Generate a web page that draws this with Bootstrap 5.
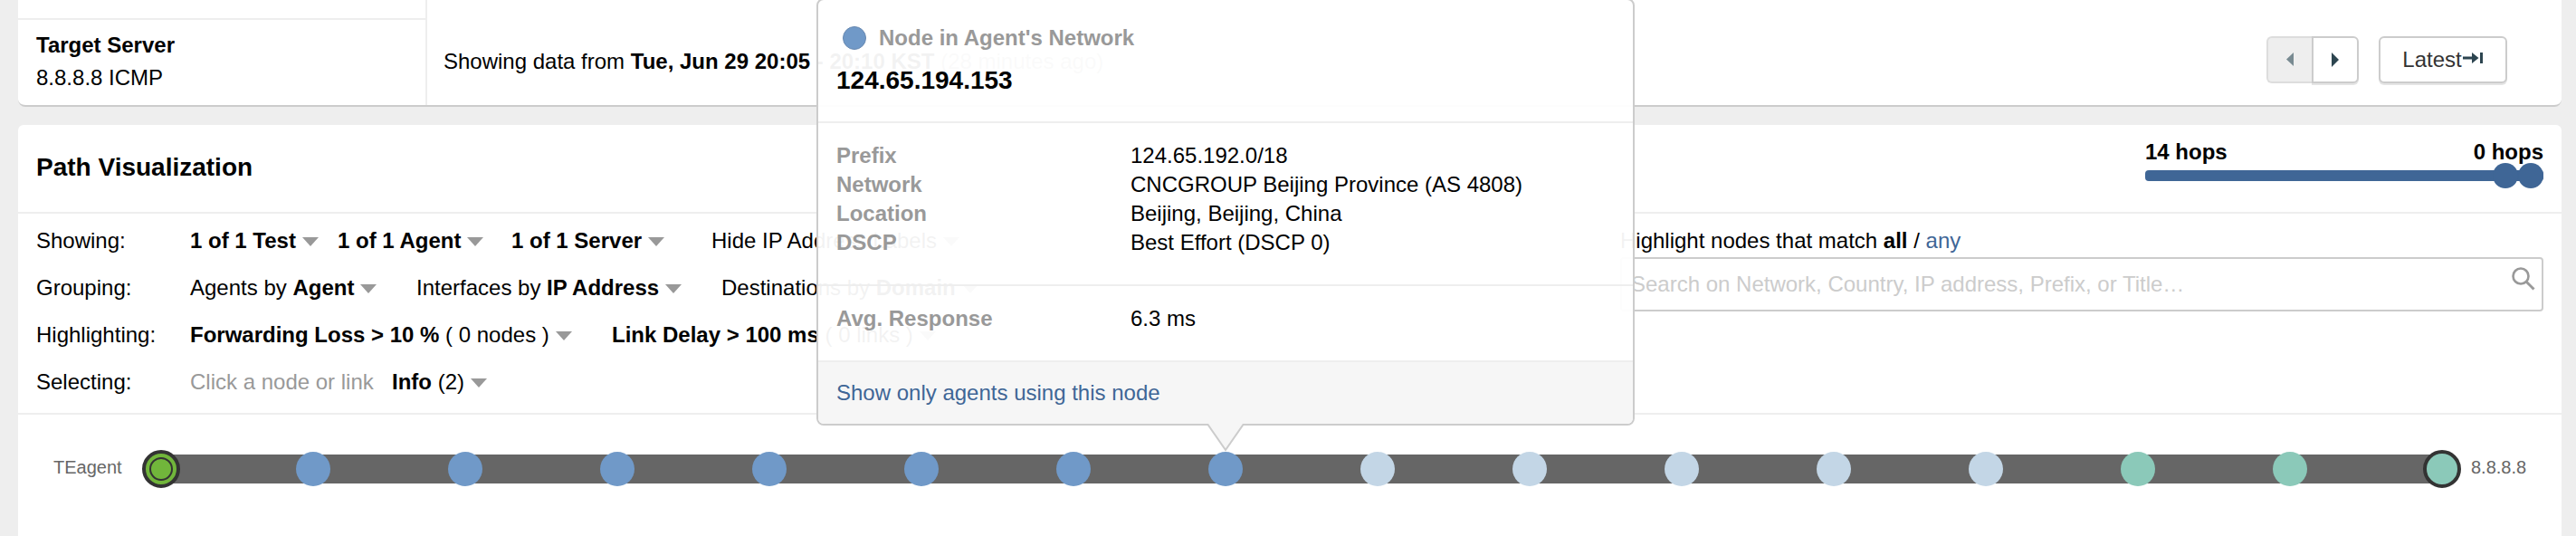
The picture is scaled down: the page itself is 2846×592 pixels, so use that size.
<!DOCTYPE html>
<html lang="en">
<head>
<meta charset="utf-8">
<title>Path Visualization</title>
<link href="https://cdn.jsdelivr.net/npm/bootstrap@5.3.0/dist/css/bootstrap.min.css" rel="stylesheet">
<style>
body{background:#eee;color:#000;font:24px/36px "Liberation Sans",Arial,sans-serif;height:592px;overflow:hidden}
a{color:#3f6696;text-decoration:none}
.page{width:2846px;height:592px;padding:0 16px 0 20px;overflow:hidden}
.panel{background:#fff;width:2810px}
.summary{height:118px;border-bottom:2px solid #ccc;border-radius:0 0 8px 8px}
.target{width:452px;border-right:2px solid #eee}
.target-prev{height:22px;border-bottom:2px solid #eee}
.target-box{padding:10px 20px 0}
.range{padding:20px 0 0 18px}
.steps{margin:40px 60px 0 auto;gap:22px}
.tool{height:52px;border:2px solid #ccc;background:#fff;box-shadow:0 2px 0 #e5e5e5;color:#333;padding:0;font-size:24px;line-height:46px;border-radius:6px}
.tool.prev{width:50px;background:#eee;border-color:#ddd;border-right:0;box-shadow:none;border-radius:6px 0 0 6px}
.tool.next{width:52px;border-radius:0 6px 6px 0}
.tool.latest{width:142px}
.tool svg{display:block}
.tool.latest svg{margin-top:-4px}
.viz{margin-top:20px;height:480px;border-radius:6px 6px 0 0}
.viz-head{height:98px;padding:0 20px;border-bottom:2px solid #eee}
.viz-head h1{font-size:28px;line-height:40px;font-weight:700;margin:27px 0 0}
.hops{width:440px;padding-top:16px;line-height:28px;font-weight:700}
.hop-track{height:12px;margin-top:6px;border-radius:4px;background:#3f6696}
.hop-track i{width:28px;height:28px;border-radius:50%;background:#3f6696;flex:none}
.filters{height:222px;padding:4px 20px 8px;border-bottom:2px solid #eee;line-height:52px;white-space:nowrap}
.filter-list{width:1750px}
.filter-row{display:grid;height:52px}
.r1{grid-template-columns:170px 163px 192px 221px 1fr}
.r2{grid-template-columns:170px 250px 337px 1fr}
.r3{grid-template-columns:170px 466px 1fr}
.r4{grid-template-columns:170px 223px 1fr}
.caret{display:inline-block;border:9px solid transparent;border-top:10px solid #999;border-bottom:0;vertical-align:2px;margin-left:7px}
.soft{color:#999}
.match{width:1020px}
.match-label{height:44px}
.match-box{height:60px}
.match-box input{height:60px;border:2px solid #ccc;border-radius:4px;padding:0 10px;font-size:24px;line-height:36px}
.match-box input::placeholder{color:#ccc;opacity:1}
.match-box svg{position:absolute;right:8px;top:10px}
.route{padding-top:44px;font-size:20px;line-height:32px;color:#666}
.route .from{width:158px;padding-left:39px}
.route .to{padding-left:32px}
.route span{margin-top:-2px}
.route-line{width:2520px;height:32px;background:#666}
.hop{width:38px;height:38px;margin:0 -19px;border-radius:50%;flex:none;background:#7099c8}
.hop.far{background:#c3d6e6}
.hop.dest{background:#8bc9b9}
.hop.end{width:42px;height:42px;margin:0 -21px;border:4px solid #333}
.hop.agent{background:#71b63b}
.hop.agent::before{content:"";width:26px;height:26px;border:2px solid #333;border-radius:50%;margin:4px;display:block}
.tip{position:absolute;left:902px;top:-2px;width:904px;height:472px;border:2px solid #ccc;border-radius:8px;background:rgba(255,255,255,.95);line-height:32px}
.tip section{padding:20px 20px 0;border-bottom:2px solid #eee}
.tip .who{height:136px;padding-top:26px}
.tip .dot{width:26px;height:26px;border-radius:50%;background:#7099c8;border:1px solid #6788b0;margin:0 14px 0 7px}
.tip .addr{font-size:28px;line-height:40px;font-weight:700;margin-top:11px}
.tip .facts{height:180px}
.tip .timing{height:84px}
.tip dl{display:grid;grid-template-columns:325px 1fr;margin:0}
.tip dt{color:#999}
.tip dd{margin:0}
.tip footer{height:68px;padding:18px 20px 0;background:#f6f6f6;border-radius:0 0 6px 6px}
.tip .pointer{position:absolute;left:428px;top:466px}
</style>
</head>
<body>
<main class="page position-relative">
  <div class="panel summary d-flex">
    <div class="target">
      <div class="target-prev"></div>
      <div class="target-box"><b>Target Server</b><br>8.8.8.8 ICMP</div>
    </div>
    <div class="range d-flex align-items-center"><div>Showing data from <b>Tue, Jun 29 20:05 - 20:10 KST</b> <span class="soft">(28 minutes ago)</span></div></div>
    <div class="steps d-flex align-items-start">
      <div class="d-flex">
        <button class="tool prev d-flex align-items-center justify-content-center" aria-label="Previous"><svg width="8" height="16"><path d="M8 0v15L0 7.5z" fill="#788a91"/></svg></button>
        <button class="tool next d-flex align-items-center justify-content-center" aria-label="Next"><svg width="8" height="16"><path d="M0 0v16l8-8z" fill="#2d4550"/></svg></button>
      </div>
      <button class="tool latest d-flex align-items-center justify-content-center">Latest<svg width="24" height="14"><path d="M1 5.500h10V1l7.500 6-7.500 6V8.500H1zM20 1h3v12h-3z" fill="#2d4550"/></svg></button>
    </div>
  </div>

  <div class="panel viz">
    <div class="viz-head d-flex justify-content-between align-items-start">
      <h1>Path Visualization</h1>
      <div class="hops">
        <div class="d-flex justify-content-between"><span>14 hops</span><span>0 hops</span></div>
        <div class="hop-track d-flex justify-content-end align-items-center"><i></i><i></i></div>
      </div>
    </div>
    <div class="filters d-flex">
      <div class="filter-list">
        <div class="filter-row r1"><div>Showing:</div><div><b>1 of 1 Test</b><i class="caret"></i></div><div><b>1 of 1 Agent</b><i class="caret"></i></div><div><b>1 of 1 Server</b><i class="caret"></i></div><div>Hide IP Address Labels<i class="caret"></i></div></div>
        <div class="filter-row r2"><div>Grouping:</div><div>Agents by <b>Agent</b><i class="caret"></i></div><div>Interfaces by <b>IP Address</b><i class="caret"></i></div><div>Destinations by <b>Domain</b><i class="caret"></i></div></div>
        <div class="filter-row r3"><div>Highlighting:</div><div><b>Forwarding Loss &gt; 10 %</b> ( 0 nodes )<i class="caret"></i></div><div><b>Link Delay &gt; 100 ms</b> ( 0 links )<i class="caret"></i></div></div>
        <div class="filter-row r4"><div>Selecting:</div><div class="soft">Click a node or link</div><div><b>Info</b> (2)<i class="caret"></i></div></div>
      </div>
      <div class="match">
        <div class="match-label">Highlight nodes that match <b>all</b> / <a href="#">any</a></div>
        <div class="match-box position-relative">
          <input class="form-control d-block" type="text" placeholder="Search on Network, Country, IP address, Prefix, or Title…">
          <svg width="28" height="28" fill="none" stroke="#999" stroke-width="2.600"><circle cx="11" cy="11" r="8.500"/><path d="M17 17l8.500 8.500" stroke-width="3"/></svg>
        </div>
      </div>
    </div>
    <div class="route d-flex">
      <span class="from">TEagent</span>
      <div class="route-line d-flex justify-content-between align-items-center">
        <div class="hop end agent"></div><div class="hop"></div><div class="hop"></div><div class="hop"></div><div class="hop"></div><div class="hop"></div><div class="hop"></div><div class="hop"></div>
        <div class="hop far"></div><div class="hop far"></div><div class="hop far"></div><div class="hop far"></div><div class="hop far"></div>
        <div class="hop dest"></div><div class="hop dest"></div><div class="hop end dest"></div>
      </div>
      <span class="to">8.8.8.8</span>
    </div>
  </div>

  <aside class="tip">
    <section class="who">
      <div class="d-flex align-items-center fw-bold soft"><i class="dot"></i>Node in Agent's Network</div>
      <div class="addr">124.65.194.153</div>
    </section>
    <section class="facts">
      <dl><dt>Prefix</dt><dd>124.65.192.0/18</dd><dt>Network</dt><dd>CNCGROUP Beijing Province (AS 4808)</dd><dt>Location</dt><dd>Beijing, Beijing, China</dd><dt>DSCP</dt><dd>Best Effort (DSCP 0)</dd></dl>
    </section>
    <section class="timing"><dl><dt>Avg. Response</dt><dd>6.3 ms</dd></dl></section>
    <footer><a href="#">Show only agents using this node</a></footer>
    <svg class="pointer" width="44" height="34"><path d="M3 0h38v3L22 31 3 3z" fill="#f6f6f6"/><path d="M1 3h1.500L22 31 41.500 3H43" fill="none" stroke="#ccc" stroke-width="2"/></svg>
  </aside>
</main>
<script src="https://cdn.jsdelivr.net/npm/bootstrap@5.3.0/dist/js/bootstrap.bundle.min.js"></script>
</body>
</html>
